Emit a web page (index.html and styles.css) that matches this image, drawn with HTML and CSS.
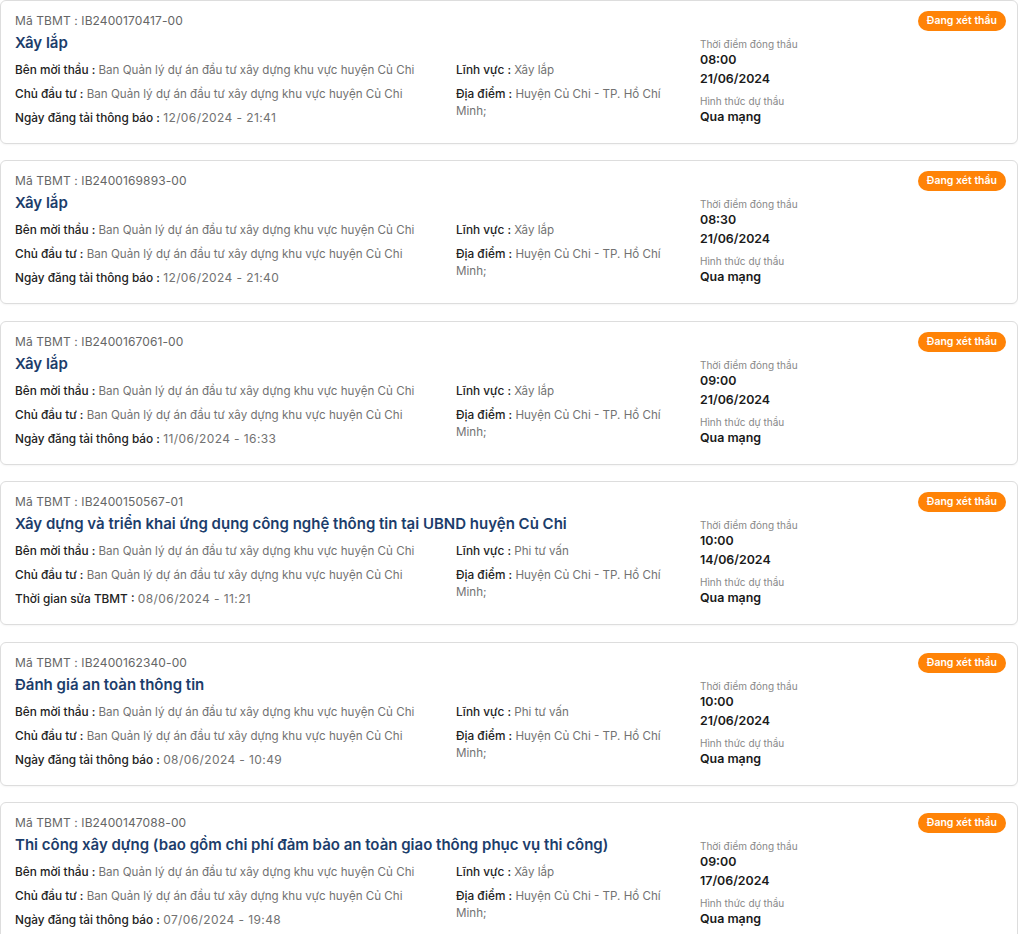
FILE: index.html
```html
<!DOCTYPE html>
<html lang="vi">
<head>
<meta charset="utf-8">
<title>Danh sách TBMT</title>
<link rel="stylesheet" href="styles.css">
</head>
<body>
<div class="list">

  <div class="card">
    <div class="main">
      <div class="code">Mã TBMT : IB2400170417-00</div>
      <div class="title">Xây lắp</div>
      <div class="cols">
        <div class="col col-a">
          <div class="row"><b>Bên mời thầu :</b> Ban Quản lý dự án đầu tư xây dựng khu vực huyện Củ Chi</div>
          <div class="row"><b>Chủ đầu tư :</b> Ban Quản lý dự án đầu tư xây dựng khu vực huyện Củ Chi</div>
          <div class="row"><b>Ngày đăng tải thông báo :</b> <span class="num">12/06/2024 - 21:41</span></div>
        </div>
        <div class="col col-b">
          <div class="row"><b>Lĩnh vực :</b> Xây lắp</div>
          <div class="row"><b>Địa điểm :</b> Huyện Củ Chi - TP. Hồ Chí Minh;</div>
        </div>
      </div>
    </div>
    <div class="side">
      <div class="badge-row"><span class="badge">Đang xét thầu</span></div>
      <div class="small">Thời điểm đóng thầu</div>
      <div class="strong">08:00</div>
      <div class="strong date">21/06/2024</div>
      <div class="small gap">Hình thức dự thầu</div>
      <div class="strong">Qua mạng</div>
    </div>
  </div>

  <div class="card">
    <div class="main">
      <div class="code">Mã TBMT : IB2400169893-00</div>
      <div class="title">Xây lắp</div>
      <div class="cols">
        <div class="col col-a">
          <div class="row"><b>Bên mời thầu :</b> Ban Quản lý dự án đầu tư xây dựng khu vực huyện Củ Chi</div>
          <div class="row"><b>Chủ đầu tư :</b> Ban Quản lý dự án đầu tư xây dựng khu vực huyện Củ Chi</div>
          <div class="row"><b>Ngày đăng tải thông báo :</b> <span class="num">12/06/2024 - 21:40</span></div>
        </div>
        <div class="col col-b">
          <div class="row"><b>Lĩnh vực :</b> Xây lắp</div>
          <div class="row"><b>Địa điểm :</b> Huyện Củ Chi - TP. Hồ Chí Minh;</div>
        </div>
      </div>
    </div>
    <div class="side">
      <div class="badge-row"><span class="badge">Đang xét thầu</span></div>
      <div class="small">Thời điểm đóng thầu</div>
      <div class="strong">08:30</div>
      <div class="strong date">21/06/2024</div>
      <div class="small gap">Hình thức dự thầu</div>
      <div class="strong">Qua mạng</div>
    </div>
  </div>

  <div class="card">
    <div class="main">
      <div class="code">Mã TBMT : IB2400167061-00</div>
      <div class="title">Xây lắp</div>
      <div class="cols">
        <div class="col col-a">
          <div class="row"><b>Bên mời thầu :</b> Ban Quản lý dự án đầu tư xây dựng khu vực huyện Củ Chi</div>
          <div class="row"><b>Chủ đầu tư :</b> Ban Quản lý dự án đầu tư xây dựng khu vực huyện Củ Chi</div>
          <div class="row"><b>Ngày đăng tải thông báo :</b> <span class="num">11/06/2024 - 16:33</span></div>
        </div>
        <div class="col col-b">
          <div class="row"><b>Lĩnh vực :</b> Xây lắp</div>
          <div class="row"><b>Địa điểm :</b> Huyện Củ Chi - TP. Hồ Chí Minh;</div>
        </div>
      </div>
    </div>
    <div class="side">
      <div class="badge-row"><span class="badge">Đang xét thầu</span></div>
      <div class="small">Thời điểm đóng thầu</div>
      <div class="strong">09:00</div>
      <div class="strong date">21/06/2024</div>
      <div class="small gap">Hình thức dự thầu</div>
      <div class="strong">Qua mạng</div>
    </div>
  </div>

  <div class="card">
    <div class="main">
      <div class="code">Mã TBMT : IB2400150567-01</div>
      <div class="title">Xây dựng và triển khai ứng dụng công nghệ thông tin tại UBND huyện Củ Chi</div>
      <div class="cols">
        <div class="col col-a">
          <div class="row"><b>Bên mời thầu :</b> Ban Quản lý dự án đầu tư xây dựng khu vực huyện Củ Chi</div>
          <div class="row"><b>Chủ đầu tư :</b> Ban Quản lý dự án đầu tư xây dựng khu vực huyện Củ Chi</div>
          <div class="row"><b>Thời gian sửa TBMT :</b> <span class="num">08/06/2024 - 11:21</span></div>
        </div>
        <div class="col col-b">
          <div class="row"><b>Lĩnh vực :</b> Phi tư vấn</div>
          <div class="row"><b>Địa điểm :</b> Huyện Củ Chi - TP. Hồ Chí Minh;</div>
        </div>
      </div>
    </div>
    <div class="side">
      <div class="badge-row"><span class="badge">Đang xét thầu</span></div>
      <div class="small">Thời điểm đóng thầu</div>
      <div class="strong">10:00</div>
      <div class="strong date">14/06/2024</div>
      <div class="small gap">Hình thức dự thầu</div>
      <div class="strong">Qua mạng</div>
    </div>
  </div>

  <div class="card">
    <div class="main">
      <div class="code">Mã TBMT : IB2400162340-00</div>
      <div class="title">Đánh giá an toàn thông tin</div>
      <div class="cols">
        <div class="col col-a">
          <div class="row"><b>Bên mời thầu :</b> Ban Quản lý dự án đầu tư xây dựng khu vực huyện Củ Chi</div>
          <div class="row"><b>Chủ đầu tư :</b> Ban Quản lý dự án đầu tư xây dựng khu vực huyện Củ Chi</div>
          <div class="row"><b>Ngày đăng tải thông báo :</b> <span class="num">08/06/2024 - 10:49</span></div>
        </div>
        <div class="col col-b">
          <div class="row"><b>Lĩnh vực :</b> Phi tư vấn</div>
          <div class="row"><b>Địa điểm :</b> Huyện Củ Chi - TP. Hồ Chí Minh;</div>
        </div>
      </div>
    </div>
    <div class="side">
      <div class="badge-row"><span class="badge">Đang xét thầu</span></div>
      <div class="small">Thời điểm đóng thầu</div>
      <div class="strong">10:00</div>
      <div class="strong date">21/06/2024</div>
      <div class="small gap">Hình thức dự thầu</div>
      <div class="strong">Qua mạng</div>
    </div>
  </div>

  <div class="card">
    <div class="main">
      <div class="code">Mã TBMT : IB2400147088-00</div>
      <div class="title">Thi công xây dựng (bao gồm chi phí đảm bảo an toàn giao thông phục vụ thi công)</div>
      <div class="cols">
        <div class="col col-a">
          <div class="row"><b>Bên mời thầu :</b> Ban Quản lý dự án đầu tư xây dựng khu vực huyện Củ Chi</div>
          <div class="row"><b>Chủ đầu tư :</b> Ban Quản lý dự án đầu tư xây dựng khu vực huyện Củ Chi</div>
          <div class="row"><b>Ngày đăng tải thông báo :</b> <span class="num">07/06/2024 - 19:48</span></div>
        </div>
        <div class="col col-b">
          <div class="row"><b>Lĩnh vực :</b> Xây lắp</div>
          <div class="row"><b>Địa điểm :</b> Huyện Củ Chi - TP. Hồ Chí Minh;</div>
        </div>
      </div>
    </div>
    <div class="side">
      <div class="badge-row"><span class="badge">Đang xét thầu</span></div>
      <div class="small">Thời điểm đóng thầu</div>
      <div class="strong">09:00</div>
      <div class="strong date">17/06/2024</div>
      <div class="small gap">Hình thức dự thầu</div>
      <div class="strong">Qua mạng</div>
    </div>
  </div>

</div>
</body>
</html>
```

FILE: styles.css
```css
html, body {
  margin: 0;
  padding: 0;
  background: #ffffff;
}

body {
  font-family: Inter, "Noto Sans", "Liberation Sans", sans-serif;
  color: #222222;
  font-size: 12px;
}

.list {
  display: flex;
  flex-direction: column;
  gap: 16.4px;
}

.card {
  display: flex;
  border: 1px solid #dddddd;
  border-radius: 6px;
  background: #ffffff;
  padding: 11px 11px 16px 14px;
  box-shadow: 0 1px 2px rgba(0, 0, 0, 0.04);
}

.main {
  width: 685px;
  flex: none;
}

.code {
  color: #666666;
  font-size: 12px;
  letter-spacing: 0.1px;
  line-height: 18px;
}

.title {
  margin-top: 2px;
  color: #1c3d6b;
  font-size: 15px;
  font-weight: 600;
  line-height: 22px;
}

.cols {
  display: flex;
  margin-top: 8px;
}

.col {
  display: flex;
  flex-direction: column;
  gap: 7px;
}

.col-a {
  width: 441px;
  flex: none;
}

.col-b {
  width: 215px;
  flex: none;
}

.row {
  color: #727272;
  font-size: 11.6px;
  font-weight: 400;
  line-height: 17px;
}

.row b {
  color: #222222;
  font-size: 11.8px;
  font-weight: 500;
  line-height: 1;
}

.row .num {
  font-size: 12px;
  letter-spacing: 0.4px;
  line-height: 1;
}

.side {
  flex: 1;
  display: flex;
  flex-direction: column;
  margin-top: -1px;
}

.badge-row {
  display: flex;
  justify-content: flex-end;
}

.badge {
  background: #ff8307;
  color: #ffffff;
  font-size: 10.5px;
  font-weight: 600;
  line-height: 20px;
  height: 20px;
  padding: 0 9px;
  border-radius: 10px;
}

.small {
  color: #888888;
  font-size: 10px;
  line-height: 14px;
  margin-top: 6px;
}

.small.gap {
  margin-top: 7px;
}

.strong {
  color: #1a1a1a;
  font-size: 12.4px;
  font-weight: 600;
  line-height: 17px;
}

.strong.date {
  margin-top: 2px;
}
```
